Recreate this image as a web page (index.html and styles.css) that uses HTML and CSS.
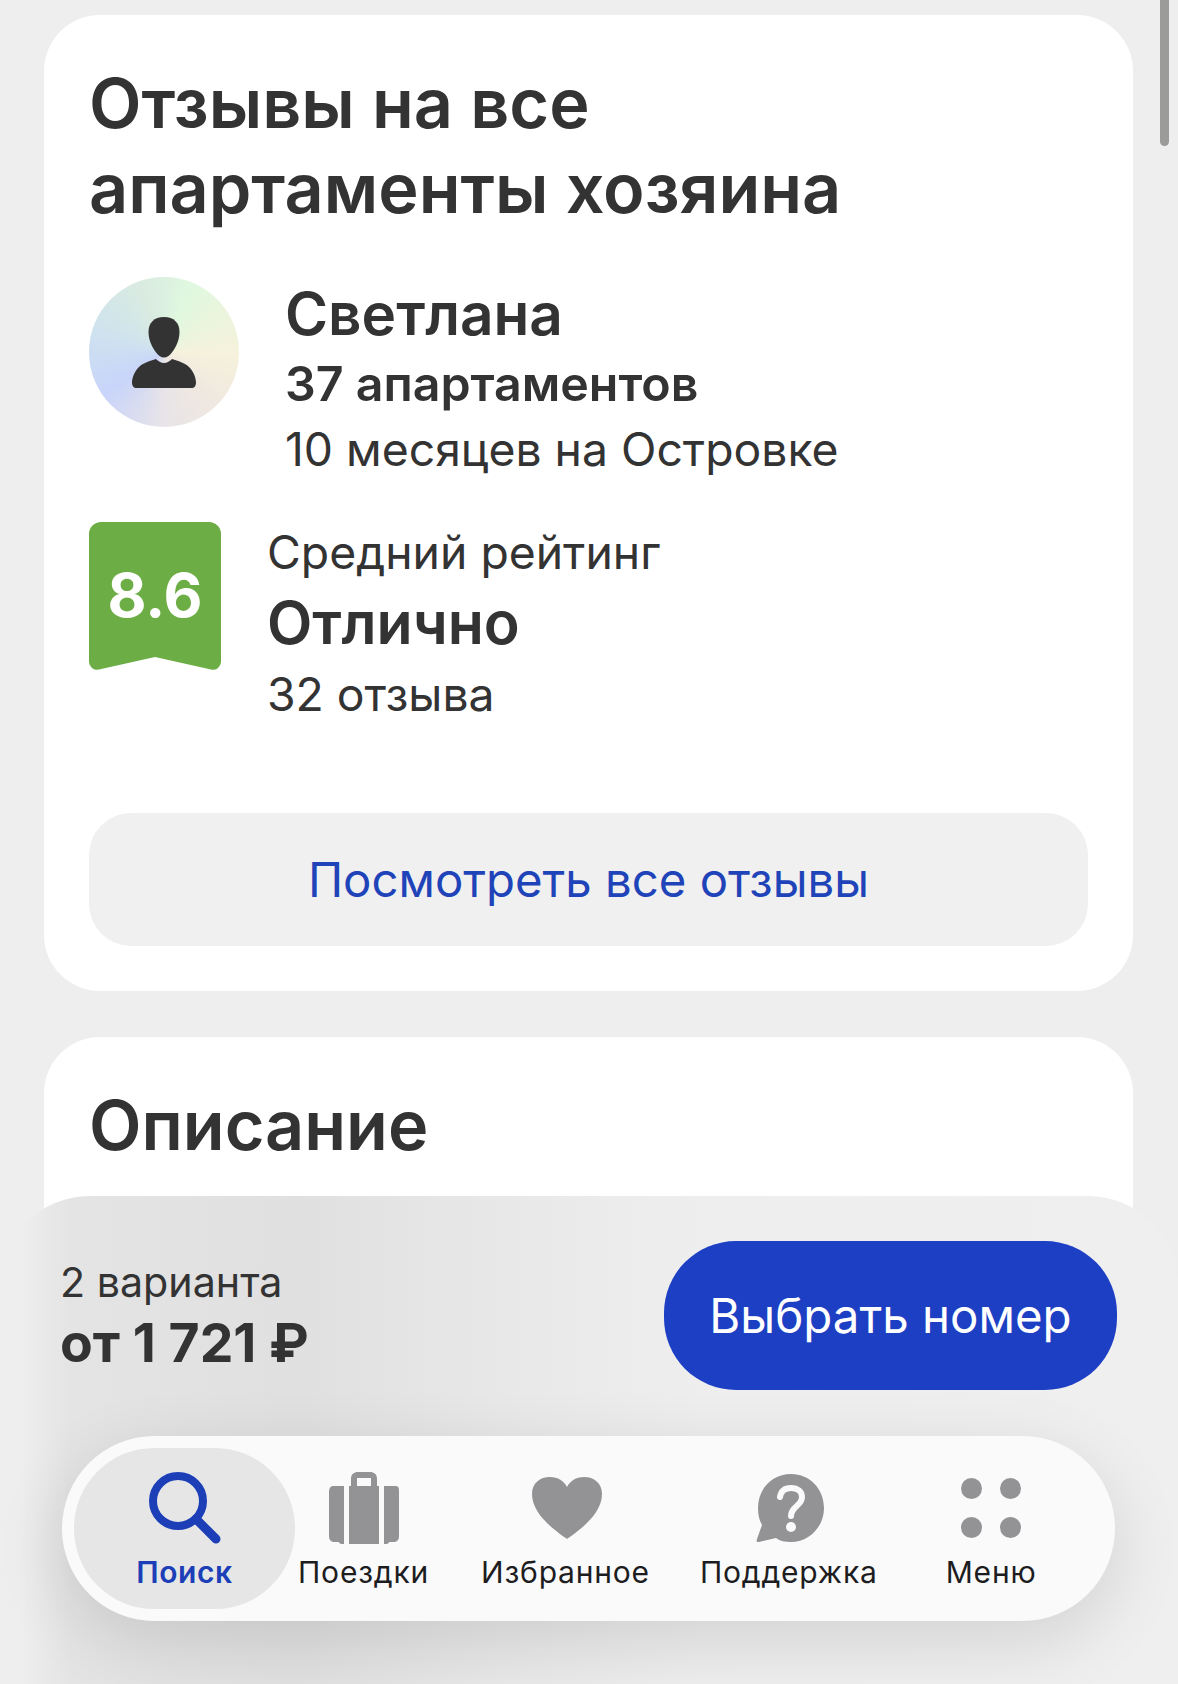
FILE: index.html
```html
<!DOCTYPE html>
<html lang="ru">
<head>
    <meta charset="UTF-8">
    <meta name="viewport" content="width=device-width, initial-scale=1.0">
    <title>Отзывы</title>
    <link rel="stylesheet" href="styles.css">
</head>
<body>
    <div class="page">
        <section class="card card-reviews">
            <h2 class="card-title">Отзывы на все апартаменты хозяина</h2>

            <div class="host">
                <div class="avatar">
                    <svg width="64" height="71" viewBox="0 0 64 71">
                        <path fill="#333" d="M32 0c10 0 15.500 6 15.500 15 0 10-6 20-11 24-3 2-6 2-9 0-5-4-11-14-11-24C16.500 6 22 0 32 0z"/>
                        <path fill="#333" d="M24 42c2 2 5 4 8 4s6-2 8-4c6 2 13 4 17 8 4 4 7 10 7 16 0 3-2 5-4 5H4c-2 0-4-2-4-5 0-6 3-12 7-16 4-4 11-6 17-8z"/>
                    </svg>
                </div>
                <div class="host-info">
                    <div class="host-name">Светлана</div>
                    <div class="host-count">37 апартаментов</div>
                    <div class="text-regular">10 месяцев на Островке</div>
                </div>
            </div>

            <div class="rating">
                <div class="rating-badge">8.6</div>
                <div class="rating-info">
                    <div class="text-regular">Средний рейтинг</div>
                    <div class="rating-word">Отлично</div>
                    <div class="text-regular">32 отзыва</div>
                </div>
            </div>

            <a class="all-reviews">Посмотреть все отзывы</a>
        </section>

        <section class="card card-description">
            <h2 class="card-title">Описание</h2>
        </section>
    </div>

    <div class="scrollbar"></div>

    <div class="bottom">
        <div class="offer">
            <div class="offer-price">
                <div class="offer-count">2 варианта</div>
                <div class="offer-value">от 1 721 ₽</div>
            </div>
            <button class="offer-button">Выбрать номер</button>
        </div>

        <nav class="tabs">
            <a class="tab tab-active">
                <svg width="72" height="72" viewBox="0 0 72 72">
                    <circle cx="29" cy="29" r="25" fill="none" stroke="#1c3fb8" stroke-width="8"/>
                    <path d="M47 47l20 20" fill="none" stroke="#1c3fb8" stroke-width="9" stroke-linecap="round"/>
                </svg>
                <span>Поиск</span>
            </a>
            <a class="tab tab-trips">
                <svg width="70" height="72" viewBox="0 0 70 72">
                    <path fill="#939396" d="M4 14h11v58h-2c-2 0-3-1-3-2H6c-4 0-6-2-6-6V20c0-4 2-6 4-6zM55 14h11c4 0 4 2 4 6v44c0 4-2 6-6 6h-4c0 1-1 2-3 2h-2zM20 14h2V7c0-5 3-7 7-7h12c4 0 7 2 7 7v7h2v58H20zM28 14h14V6H28z" fill-rule="evenodd"/>
                </svg>
                <span>Поездки</span>
            </a>
            <a class="tab tab-fav">
                <svg width="70" height="72" viewBox="-2 0 70 72">
                    <path fill="#939396" d="M35 67C30 63 0 45 0 22 0 11 8 5 18 5c8 0 14 4 17 10 3-6 9-10 17-10 10 0 18 6 18 17 0 23-30 41-35 45z"/>
                </svg>
                <span>Избранное</span>
            </a>
            <a class="tab tab-help">
                <svg width="70" height="72" viewBox="-1 0 70 72">
                    <path fill="#939396" d="M36 2c19 0 33 15 33 34S54 70 36 70c-6 0-11-1-15-4L4 70c-2 .4-3-1-2-3l5-14C4 48 3 42 3 36 3 17 17 2 36 2z"/>
                    <path fill="none" stroke="#fafafa" stroke-width="6" stroke-linecap="round" d="M25 25c1-6 5-9 11-9 7 0 11 4 11 9 0 9-11 9-11 19"/>
                    <circle cx="36" cy="55" r="5" fill="#fafafa"/>
                </svg>
                <span>Поддержка</span>
            </a>
            <a class="tab tab-menu">
                <div class="dots"><i></i><i></i><i></i><i></i></div>
                <span>Меню</span>
            </a>
        </nav>
    </div>
</body>
</html>
```

FILE: styles.css
```css
* {
    box-sizing: border-box;
}

body {
    margin: 0;
    height: 1684px;
    overflow: hidden;
    position: relative;
    background-color: #eeeeee;
    color: #333;
    font-family: 'Inter', 'Liberation Sans', sans-serif;
}

svg {
    overflow: visible;
}

.page {
    padding: 15px 45px 0 44px;
}

.card {
    background-color: #fff;
    border-radius: 56px;
    padding: 46px 45px 45px;
    margin-bottom: 46px;
}

.card-title {
    margin: 0;
    font-size: 68.300px;
    line-height: 85px;
    font-weight: 600;
    max-width: 800px;
}

.text-regular {
    font-size: 46.300px;
    line-height: 64px;
}

/* хозяин */
.host {
    display: flex;
    margin-top: 46px;
}

.avatar {
    width: 150px;
    height: 150px;
    flex: none;
    border-radius: 50%;
    display: flex;
    align-items: center;
    justify-content: center;
    background: conic-gradient(#dcf0e0 0deg, #dff8df 20deg, #f6f2dc 90deg, #f0e8e0 135deg, #e8e4e8 180deg, #c8d4fa 235deg, #cfe3ee 290deg, #d9ebe0 340deg, #dcf0e0 360deg);
}

.host-info {
    margin-left: 46px;
}

.host-name {
    font-size: 58.500px;
    line-height: 74px;
    font-weight: 600;
}

.host-count {
    font-size: 48.300px;
    line-height: 66px;
    font-weight: 600;
}

/* рейтинг */
.rating {
    display: flex;
    margin-top: 41px;
}

.rating-badge {
    width: 132px;
    height: 148px;
    flex: none;
    padding-top: 35px;
    text-align: center;
    font-size: 60px;
    line-height: 76px;
    font-weight: 700;
    color: #fff;
    background-color: #6cae45;
    clip-path: path("M12 0H120A12 12 0 0 1 132 12V140A8 8 0 0 1 122 147.500L66 135 10 147.500A8 8 0 0 1 0 140V12A12 12 0 0 1 12 0Z");
}

.rating-info {
    margin-left: 46px;
    margin-top: -2px;
}

.rating-word {
    font-size: 59px;
    line-height: 78px;
    font-weight: 600;
}

.all-reviews {
    display: block;
    margin-top: 87px;
    height: 133px;
    line-height: 133px;
    text-align: center;
    font-size: 47.300px;
    color: #1f43b8;
    background-color: #f0f0f0;
    border-radius: 42px;
}

.card-description {
    height: 300px;
}

.scrollbar {
    position: absolute;
    top: -10px;
    left: 1160px;
    width: 9px;
    height: 156px;
    border-radius: 5px;
    background-color: #9b9b9a;
}

/* нижняя панель поверх контента */
.bottom {
    position: absolute;
    left: 0;
    right: 0;
    top: 1196px;
    bottom: 0;
    padding: 45px 61px 0 60px;
    border-radius: 90px 90px 0 0;
    background: linear-gradient(90deg, #eeeeee 0, #eeeeee 20px, #e4e4e4 70px, #e0e0e0 300px, #e8e8e8 500px, #eeeeef 700px, #efeff0 100%);
}

.offer {
    display: flex;
    align-items: center;
    justify-content: space-between;
}

.offer-count {
    font-size: 41.200px;
    line-height: 54px;
}

.offer-value {
    font-size: 53.500px;
    line-height: 68px;
    font-weight: 700;
}

.offer-button {
    width: 453px;
    height: 149px;
    border: none;
    border-radius: 72px;
    color: #fff;
    background-color: #1c3fc4;
    font-family: inherit;
    font-size: 47.400px;
}

.tabs {
    position: absolute;
    left: 62px;
    top: 240px;
    width: 1053px;
    height: 185px;
    display: flex;
    padding: 12px 12px;
    border-radius: 93px;
    background-color: #fafafa;
    box-shadow: 0 20px 70px rgba(0, 0, 0, .12);
}

.tab {
    flex: none;
    display: flex;
    flex-direction: column;
    align-items: center;
    padding-top: 24px;
    font-size: 30px;
    line-height: 40px;
    letter-spacing: .8px;
    color: #1d1d1f;
}

.tab span {
    margin-top: 8px;
}

.tab-active {
    width: 221px;
    height: 161px;
    border-radius: 80px;
    background-color: #e6e6e6;
    color: #1c3fb8;
    font-weight: 600;
    letter-spacing: .6px;
}

.tab-trips {
    margin-left: 3px;
}

.tab-fav {
    margin-left: 52px;
}

.tab-help {
    margin-left: 50px;
}

.tab-menu {
    margin-left: 68px;
}

.dots {
    width: 60px;
    height: 72px;
    padding-top: 6px;
    display: grid;
    grid-template-columns: 21px 21px;
    grid-auto-rows: 21px;
    gap: 18px;
}

.dots i {
    border-radius: 50%;
    background-color: #939396;
}
```
